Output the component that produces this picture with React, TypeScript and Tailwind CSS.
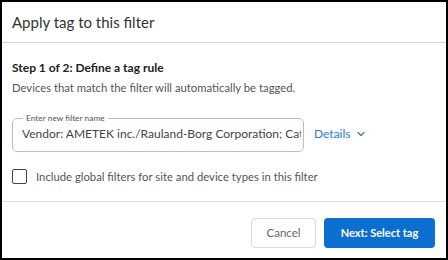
import { ChevronDown } from "lucide-react";

export default function App() {
  return (
    <div className="w-[448px] h-[260px] border-2 border-black bg-white flex flex-col font-['Lato','Liberation_Sans',sans-serif] text-[#333]">
      <div className="h-[41px] flex items-center px-[10px] border-b border-[#d6d6d6]">
        <h1 className="text-[15px] text-[#333]">Apply tag to this filter</h1>
      </div>

      <div className="flex-1 px-[10px] pt-[17px]">
        <p className="text-[12px] font-bold leading-[16px] text-[#222]">Step 1 of 2: Define a tag rule</p>
        <p className="mt-[4px] text-[11.3px] leading-[16px] text-[#555]">Devices that match the filter will automatically be tagged.</p>

        <div className="mt-[16px] flex items-start gap-[10px]">
          <fieldset className="min-w-0 shrink-0 w-[292px] h-[40px] rounded-[5px] border border-[#b3c0c9] pl-[9px] pr-[2px] overflow-hidden">
            <legend className="ml-[1px] px-[3px] text-[8.4px] leading-[12px] text-[#555]">Enter new filter name</legend>
            <div className="text-[12px] leading-[20px] text-[#444] whitespace-nowrap overflow-hidden">
              Vendor: AMETEK inc./Rauland-Borg Corporation; Category: Nurse Call
            </div>
          </fieldset>
          <button className="mt-[14px] flex items-center gap-[4px] text-[12px] leading-[16px] text-[#2a7ed8]">
            Details
            <ChevronDown className="w-[12px] h-[12px]" strokeWidth={2.5} />
          </button>
        </div>

        <label className="mt-[17px] flex items-center gap-[9px]">
          <span className="w-[15px] h-[15px] rounded-[2px] border border-[#444] bg-white" />
          <span className="text-[11.3px] leading-[15px] text-[#555]">Include global filters for site and device types in this filter</span>
        </label>
      </div>

      <div className="h-[57px] border-t border-[#dcdcdc] flex items-start justify-end gap-[8px] pt-[16px] pr-[11px]">
        <button className="w-[65px] h-[30px] rounded-[4px] border border-[#d9d9d9] bg-white text-[11.5px] text-[#666]">Cancel</button>
        <button className="w-[111px] h-[30px] rounded-[4px] bg-[#0b6fd0] text-[11px] font-bold text-white">Next: Select tag</button>
      </div>
    </div>
  );
}
